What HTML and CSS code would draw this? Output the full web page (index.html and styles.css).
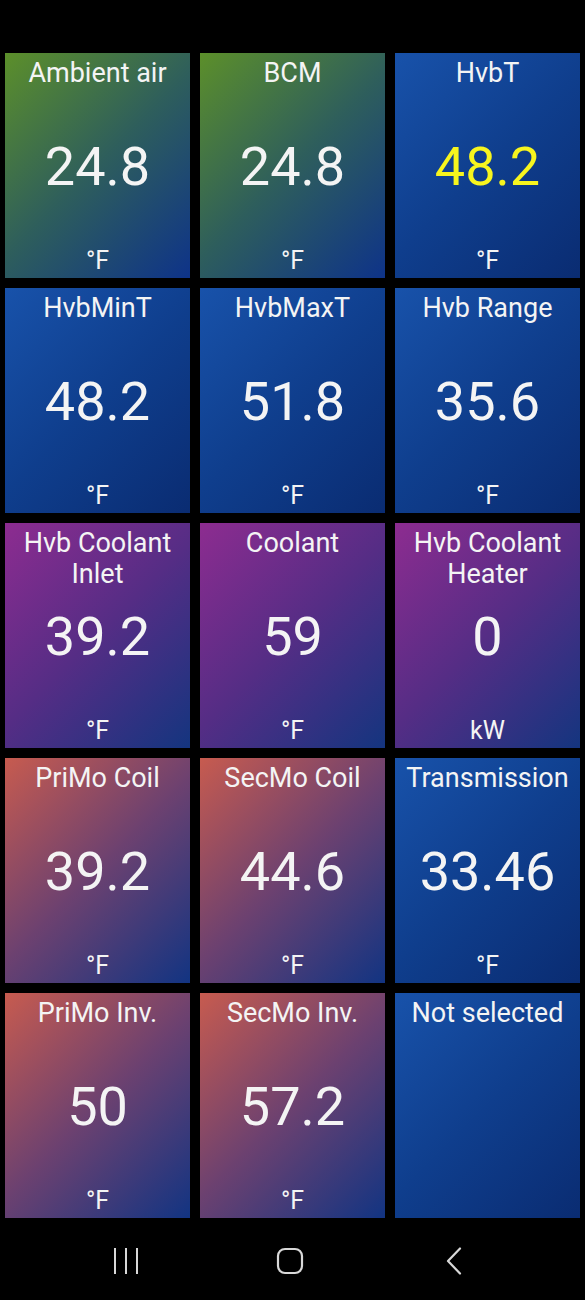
FILE: index.html
```html
<!DOCTYPE html>
<html lang="en">
<head>
  <meta charset="UTF-8">
  <title>Temperatures</title>
  <link rel="stylesheet" href="styles.css">
</head>
<body>
  <main class="grid">
    <div class="tile green"><div class="name">Ambient air</div><div class="value">24.8</div><div class="unit">°F</div></div>
    <div class="tile green"><div class="name">BCM</div><div class="value">24.8</div><div class="unit">°F</div></div>
    <div class="tile blue"><div class="name">HvbT</div><div class="value warn">48.2</div><div class="unit">°F</div></div>

    <div class="tile blue"><div class="name">HvbMinT</div><div class="value">48.2</div><div class="unit">°F</div></div>
    <div class="tile blue"><div class="name">HvbMaxT</div><div class="value">51.8</div><div class="unit">°F</div></div>
    <div class="tile blue"><div class="name">Hvb Range</div><div class="value">35.6</div><div class="unit">°F</div></div>

    <div class="tile purple"><div class="name">Hvb Coolant Inlet</div><div class="value">39.2</div><div class="unit">°F</div></div>
    <div class="tile purple"><div class="name">Coolant</div><div class="value">59</div><div class="unit">°F</div></div>
    <div class="tile purple"><div class="name">Hvb Coolant Heater</div><div class="value">0</div><div class="unit">kW</div></div>

    <div class="tile salmon"><div class="name">PriMo Coil</div><div class="value">39.2</div><div class="unit">°F</div></div>
    <div class="tile salmon"><div class="name">SecMo Coil</div><div class="value">44.6</div><div class="unit">°F</div></div>
    <div class="tile blue"><div class="name">Transmission</div><div class="value">33.46</div><div class="unit">°F</div></div>

    <div class="tile salmon"><div class="name">PriMo Inv.</div><div class="value">50</div><div class="unit">°F</div></div>
    <div class="tile salmon"><div class="name">SecMo Inv.</div><div class="value">57.2</div><div class="unit">°F</div></div>
    <div class="tile blue"><div class="name">Not selected</div></div>
  </main>

  <nav class="navbar">
    <div class="navbtn">
      <svg width="26" height="30" viewBox="0 0 26 30">
        <path d="M2 2v26M13 2v26M24 2v26" stroke="#d8d8d8" stroke-width="2" fill="none"/>
      </svg>
    </div>
    <div class="navbtn">
      <svg width="28" height="28" viewBox="0 0 28 28">
        <rect x="2" y="2" width="24" height="24" rx="7" stroke="#d8d8d8" stroke-width="2.2" fill="none"/>
      </svg>
    </div>
    <div class="navbtn">
      <svg width="18" height="28" viewBox="0 0 18 28">
        <path d="M15 1.5L3 14l12 12.5" stroke="#d8d8d8" stroke-width="2.2" fill="none" stroke-linecap="round" stroke-linejoin="round"/>
      </svg>
    </div>
  </nav>
</body>
</html>
```

FILE: styles.css
```css
body {
  margin: 0;
  background-color: #000;
  font-family: Roboto, "Liberation Sans", sans-serif;
  color: #f4f4f4;
}
.grid {
  display: grid;
  grid-template-columns: repeat(3, 185px);
  grid-auto-rows: 225px;
  gap: 10px;
  padding: 53px 5px 0;
}
.tile {
  display: grid;
  text-align: center;
}
.tile > div {
  grid-area: 1 / 1;
}
.green {
  background: linear-gradient(135deg, #5c8f2a 0%, #2e5e5c 50%, #0e3389 100%);
}
.blue {
  background: linear-gradient(135deg, #1852aa 0%, #0f3e8d 50%, #0a2c72 100%);
}
.purple {
  background: linear-gradient(135deg, #8d2c90 0%, #552d85 50%, #14357f 100%);
}
.salmon {
  background: linear-gradient(135deg, #c75b4f 0%, #6c4170 50%, #123482 100%);
}
.name {
  align-self: start;
  font-size: 27px;
  line-height: 31px;
  padding: 5px 2px 0;
}
.value {
  align-self: center;
  font-size: 54px;
  line-height: 64px;
  padding-top: 2px;
}
.warn {
  color: #f7f51e;
}
.unit {
  align-self: end;
  font-size: 25px;
  line-height: 31px;
  padding-bottom: 2px;
}
.navbar {
  display: grid;
  grid-template-columns: repeat(3, 164px);
  height: 82px;
  padding-left: 44px;
  align-items: center;
}
.navbtn {
  display: flex;
  justify-content: center;
  align-items: center;
  padding-top: 4px;
}
```
